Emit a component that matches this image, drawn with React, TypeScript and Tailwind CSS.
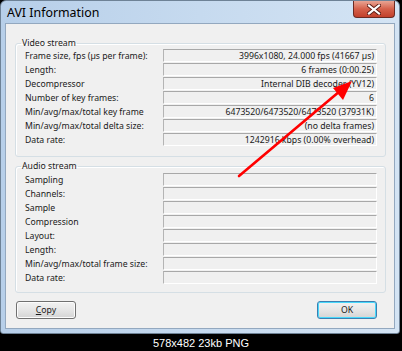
import React from "react";

const video = [
  { label: "Frame size, fps (µs per frame):", value: "3996x1080, 24.000 fps (41667 µs)" },
  { label: "Length:", value: "6 frames (0:00.25)" },
  { label: "Decompressor", value: "Internal DIB decoder (YV12)" },
  { label: "Number of key frames:", value: "6" },
  { label: "Min/avg/max/total key frame", value: "6473520/6473520/6473520 (37931K)" },
  { label: "Min/avg/max/total delta size:", value: "(no delta frames)" },
  { label: "Data rate:", value: "1242916 kbps (0.00% overhead)" },
];

const audio = [
  "Sampling",
  "Channels:",
  "Sample",
  "Compression",
  "Layout:",
  "Length:",
  "Min/avg/max/total frame size:",
  "Data rate:",
];

function Row({ label, value }: { label: string; value?: string }) {
  return (
    <div className="flex h-[14px] items-start">
      <div className="w-[138px] pt-[1px] leading-[12px] whitespace-nowrap">{label}</div>
      <div className="flex h-[13px] w-[214px] items-center justify-end border border-t-[#a8a8a8] border-l-[#b4b4b4] border-r-white border-b-white bg-[#f0f0f0] pr-[2px] leading-[12px] whitespace-nowrap">
        {value}
      </div>
    </div>
  );
}

function Group({ title, children, bottom }: { title: string; children: React.ReactNode; bottom: string }) {
  return (
    <fieldset className="rounded-[3px] border border-[#d5dfe5] p-0 shadow-[inset_1px_1px_0_#ffffff]">
      <legend className="ml-[5px] px-[1px] leading-[12px]">{title}</legend>
      <div className={"pl-[9px] pr-[8px] " + bottom}>{children}</div>
    </fieldset>
  );
}

export default function App() {
  return (
    <div
      className="relative flex h-[351px] w-[402px] flex-col bg-black text-[8.7px] text-[#1a1a1a]"
      style={{ fontFamily: '"Noto Sans", "Open Sans", sans-serif' }}
    >
      {/* window */}
      <div className="flex h-[334px] w-[400px] flex-col rounded-t-[6px] rounded-b-[3px] border border-[#6e8296] bg-gradient-to-r from-[#b7cfe9] via-[#c6daef] to-[#d4e4f4] px-[4px] pb-[4px]">
        <div className="flex h-[22px] items-start justify-between">
          <div className="pl-[2px] pt-[4px] text-[12.4px] leading-[16px] text-black">AVI Information</div>
          <div className="flex h-[17px] w-[42px] items-center justify-center rounded-b-[4px] border border-t-0 border-[#6b2a22] bg-gradient-to-b from-[#e8a493] via-[#d5604a] to-[#c2402b]">
            <svg width="14" height="11" viewBox="0 0 14 11">
              <path d="M2 1.5 L12 9.5 M12 1.5 L2 9.5" stroke="#5a1a12" strokeWidth="4" strokeLinecap="square" />
              <path d="M2 1.5 L12 9.5 M12 1.5 L2 9.5" stroke="#ffffff" strokeWidth="2.2" strokeLinecap="square" />
            </svg>
          </div>
        </div>
        <div className="flex flex-1 flex-col border border-[#93a8bf] bg-[#f0f0f0] px-[9px] pt-[13px]">
          <Group title="Video stream" bottom="pb-[9px]">
            {video.map((r) => (
              <Row key={r.label} label={r.label} value={r.value} />
            ))}
          </Group>
          <div className="mt-[3px]">
            <Group title="Audio stream" bottom="pt-[1px] pb-[7px]">
              {audio.map((l) => (
                <Row key={l} label={l} />
              ))}
            </Group>
          </div>
          <div className="mt-[8px] flex justify-between pl-[1px] pr-[8px]">
            <button className="flex h-[18px] w-[60px] items-center justify-center rounded-[3px] border border-[#707070] bg-gradient-to-b from-[#f2f2f2] via-[#e6e6e6] to-[#d4d4d4] text-[8.7px] leading-[12px] text-[#1a1a1a] shadow-[inset_0_0_0_1px_#fcfcfc]">
              <span>
                <span className="underline">C</span>opy
              </span>
            </button>
            <button className="flex h-[18px] w-[60px] items-center justify-center rounded-[3px] border border-[#3c7fb1] bg-gradient-to-b from-[#f2f2f2] via-[#e6e6e6] to-[#d4d4d4] text-[8.7px] leading-[12px] text-[#1a1a1a] shadow-[inset_0_0_0_1px_#48d8fb]">
              OK
            </button>
          </div>
        </div>
      </div>
      {/* footer */}
      <div
        className="flex flex-1 items-center justify-center text-[11px] leading-[12px] text-white"
        style={{ fontFamily: '"Liberation Sans", Arial, sans-serif' }}
      >
        578x482 23kb PNG
      </div>

      {/* red arrow overlay */}
      <svg className="pointer-events-none absolute left-0 top-0" width="402" height="351" viewBox="0 0 402 351">
        <line x1="239" y1="176" x2="340" y2="91" stroke="#ff0000" strokeWidth="2.6" strokeLinecap="round" />
        <polygon points="352,81 333,88 343,100" fill="#ff0000" />
      </svg>
    </div>
  );
}
